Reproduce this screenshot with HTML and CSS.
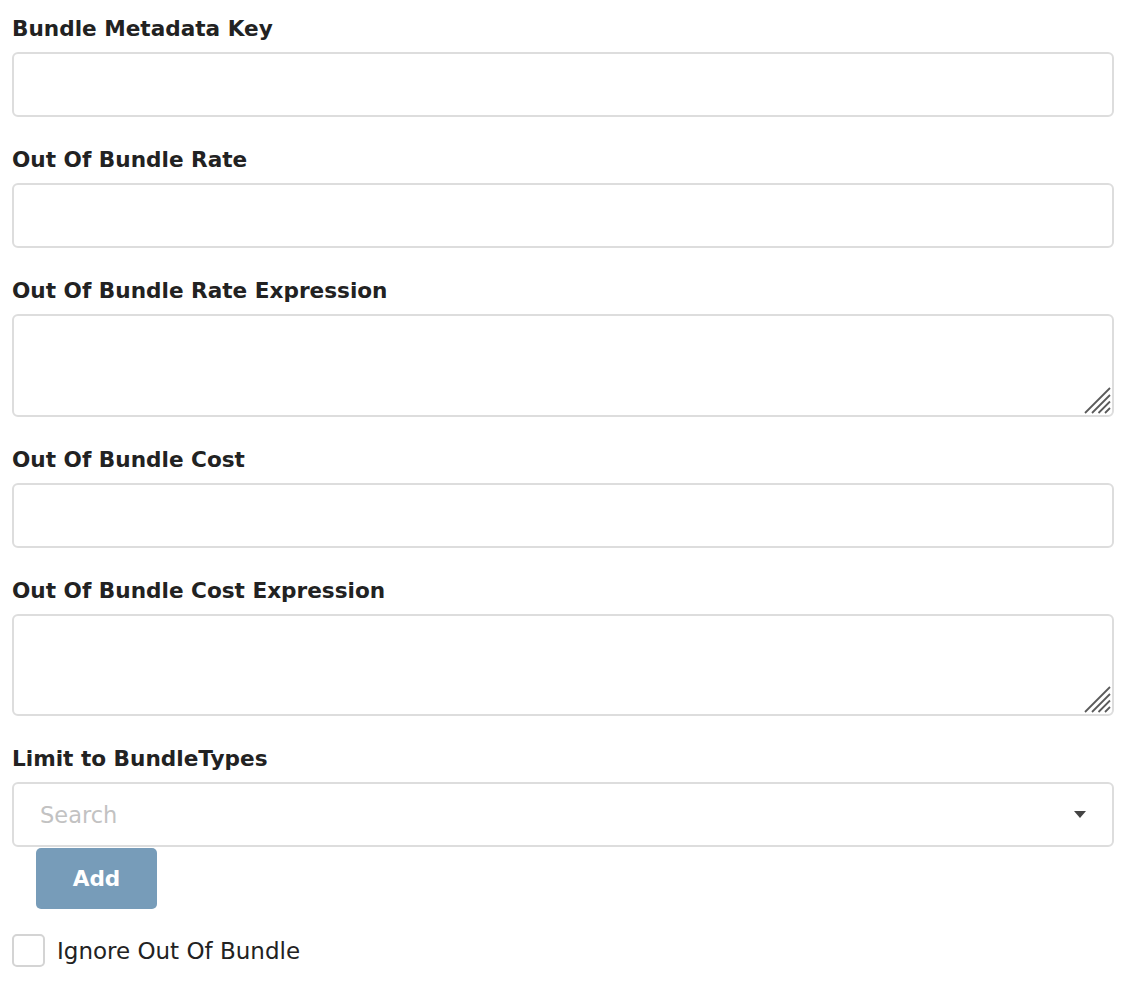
FILE: index.html
```html
<!DOCTYPE html>
<html>
<head>
<meta charset="utf-8">
<link rel="stylesheet" href="styles.css">
</head>
<body>
<form class="form">
  <div class="field">
    <label class="label">Bundle Metadata Key</label>
    <input class="input" type="text">
  </div>
  <div class="field">
    <label class="label">Out Of Bundle Rate</label>
    <input class="input" type="text">
  </div>
  <div class="field">
    <label class="label">Out Of Bundle Rate Expression</label>
    <div class="ta-wrap">
      <textarea class="textarea"></textarea>
      <svg class="grip" viewBox="0 0 28 28" width="28" height="28"><line x1="2" y1="27" x2="27" y2="2"/><line x1="9" y1="27" x2="27" y2="9"/><line x1="15.5" y1="27" x2="27" y2="15.5"/><line x1="22" y1="27" x2="27" y2="22"/></svg>
    </div>
  </div>
  <div class="field">
    <label class="label">Out Of Bundle Cost</label>
    <input class="input" type="text">
  </div>
  <div class="field">
    <label class="label">Out Of Bundle Cost Expression</label>
    <div class="ta-wrap">
      <textarea class="textarea"></textarea>
      <svg class="grip" viewBox="0 0 28 28" width="28" height="28"><line x1="2" y1="27" x2="27" y2="2"/><line x1="9" y1="27" x2="27" y2="9"/><line x1="15.5" y1="27" x2="27" y2="15.5"/><line x1="22" y1="27" x2="27" y2="22"/></svg>
    </div>
  </div>
  <div class="field">
    <label class="label">Limit to BundleTypes</label>
    <div class="select">
      <span class="placeholder">Search</span>
      <svg class="caret" viewBox="0 0 12 7" width="12" height="7"><path d="M0 0 H12 L6 7 Z"/></svg>
    </div>
    <button type="button" class="btn">Add</button>
  </div>
  <div class="check-row">
    <span class="checkbox"></span>
    <span class="check-label">Ignore Out Of Bundle</span>
  </div>
</form>
</body>
</html>
```

FILE: styles.css
```css
html, body {
  margin: 0;
  padding: 0;
  background: #ffffff;
}
body {
  font-family: "DejaVu Sans", "Liberation Sans", sans-serif;
  color: #222222;
}
.form {
  width: 1102px;
  padding: 13px 0 0 12px;
}
.field {
  margin-bottom: 27px;
}
.label {
  display: block;
  font-weight: bold;
  font-size: 21.6px;
  line-height: 31px;
  margin-bottom: 8px;
  color: #222222;
}
.input, .textarea, .select {
  display: block;
  box-sizing: border-box;
  width: 100%;
  border: 2px solid #dddddd;
  border-radius: 6px;
  background: #ffffff;
  margin: 0;
  outline: none;
}
.input {
  height: 65px;
}
.ta-wrap {
  position: relative;
}
.textarea {
  height: 102.5px;
  resize: none;
  font-family: inherit;
}
.grip {
  position: absolute;
  right: 3px;
  bottom: 3px;
  stroke: #5a5a5a;
  stroke-width: 1.8;
}
.select {
  height: 65px;
  display: flex;
  align-items: center;
  justify-content: space-between;
  padding: 0 26px 0 26px;
}
.placeholder {
  font-size: 22.5px;
  color: #c2c2c2;
}
.caret {
  fill: #444444;
}
.btn {
  display: block;
  margin: 1px 0 0 24px;
  width: 121px;
  height: 61px;
  border: none;
  border-radius: 5px;
  background: #779cb9;
  color: #ffffff;
  font-family: inherit;
  font-weight: bold;
  font-size: 21.6px;
  padding: 0;
}
.check-row {
  display: flex;
  align-items: center;
  gap: 12px;
  margin-top: -2px;
}
.checkbox {
  display: block;
  box-sizing: border-box;
  width: 33px;
  height: 33px;
  border: 2px solid #d4d4d4;
  border-radius: 5px;
}
.check-label {
  font-size: 23px;
  color: #222222;
}
```
